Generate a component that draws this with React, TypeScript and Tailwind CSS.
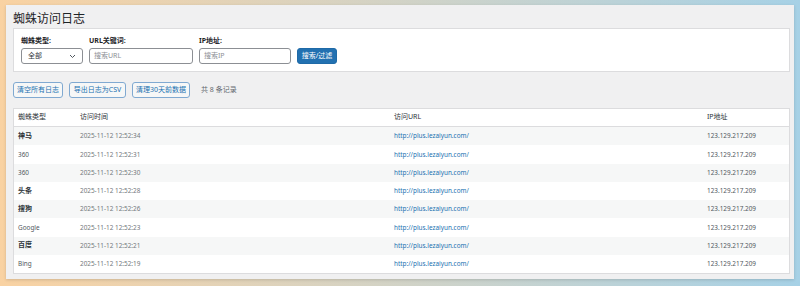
import React from "react";

const rows = [
  { type: "神马", bold: true, time: "2025-11-12 12:52:34" },
  { type: "360", bold: false, time: "2025-11-12 12:52:31" },
  { type: "360", bold: false, time: "2025-11-12 12:52:30" },
  { type: "头条", bold: true, time: "2025-11-12 12:52:28" },
  { type: "搜狗", bold: true, time: "2025-11-12 12:52:26" },
  { type: "Google", bold: false, time: "2025-11-12 12:52:23" },
  { type: "百度", bold: true, time: "2025-11-12 12:52:21" },
  { type: "Bing", bold: false, time: "2025-11-12 12:52:19" },
];

export default function App() {
  return (
    <div
      className="w-[800px] h-[286px] overflow-hidden bg-gradient-to-r from-[#f9d2a2] to-[#a6d1e6] pt-[5px] pl-[6px]"
      style={{ fontFamily: '"Noto Sans", "Noto Sans CJK SC", sans-serif' }}
    >
      <div className="w-[788px] h-[274px] bg-[#f0f0f1] pl-[7px] pr-[4px] shadow-[0_1px_3px_rgba(0,0,0,0.15)]">
        <h1 className="pt-[6px] text-[12px] leading-[16px] text-[#1d2327] h-[23px]">蜘蛛访问日志</h1>
        <div className="bg-white border border-[#dcdcde] h-[44px] pl-[7px] pt-[7px] flex gap-[6px] items-start">
          <div className="flex flex-col">
            <label className="text-[7px] leading-[10px] font-bold text-[#1d2327] mb-[2px]">蜘蛛类型:</label>
            <div className="w-[62px] h-[16px] border border-[#8c8f94] rounded-[3px] flex items-center justify-between px-[6px] text-[7px] text-[#2c3338]">
              <span>全部</span>
              <svg width="7" height="5" viewBox="0 0 7 5" fill="none">
                <path d="M1 1l2.5 2.5L6 1" stroke="#50575e" strokeWidth="1" />
              </svg>
            </div>
          </div>
          <div className="flex flex-col">
            <label className="text-[7px] leading-[10px] font-bold text-[#1d2327] mb-[2px]">URL关键词:</label>
            <div className="w-[104px] h-[16px] border border-[#8c8f94] rounded-[3px] flex items-center px-[4px] text-[7px] text-[#8c8f94]">
              搜索URL
            </div>
          </div>
          <div className="flex flex-col">
            <label className="text-[7px] leading-[10px] font-bold text-[#1d2327] mb-[2px]">IP地址:</label>
            <div className="w-[92px] h-[16px] border border-[#8c8f94] rounded-[3px] flex items-center px-[4px] text-[7px] text-[#8c8f94]">
              搜索IP
            </div>
          </div>
          <div className="mt-[12px] w-[40px] h-[16px] bg-[#2271b1] border border-[#1f6aa7] rounded-[3px] text-white text-[7px] flex items-center justify-center">
            搜索/过滤
          </div>
        </div>
        <div className="flex items-center gap-[6px] mt-[10px] h-[16px]">
          <div className="h-[16px] w-[50px] flex items-center justify-center border border-[#80a9d1] bg-[#f6f7f7] rounded-[3px] text-[7px] text-[#2271b1]">清空所有日志</div>
          <div className="h-[16px] w-[57px] flex items-center justify-center border border-[#80a9d1] bg-[#f6f7f7] rounded-[3px] text-[7px] text-[#2271b1]">导出日志为CSV</div>
          <div className="h-[16px] w-[58px] flex items-center justify-center border border-[#80a9d1] bg-[#f6f7f7] rounded-[3px] text-[7px] text-[#2271b1]">清理30天前数据</div>
          <span className="ml-[5px] text-[7px] text-[#646970]">共 8 条记录</span>
        </div>
        <div className="mt-[10px] bg-white border border-[#dcdcde]">
          <div className="flex h-[18px] items-center border-b border-[#dcdcde] text-[7px] text-[#2c3338]">
            <div className="w-[66px] pl-[4px]">蜘蛛类型</div>
            <div className="w-[314px]">访问时间</div>
            <div className="w-[313px]">访问URL</div>
            <div>IP地址</div>
          </div>
          {rows.map((r, i) => (
            <div
              key={i}
              className={`flex h-[18.25px] items-center text-[6.4px] text-[#50575e] ${i % 2 === 0 ? "bg-[#f6f7f7]" : "bg-white"}`}
            >
              <div className={`w-[66px] pl-[4px] ${r.bold ? "font-bold text-[7px] text-[#2c3338]" : ""}`}>{r.type}</div>
              <div className="w-[314px] text-[#72777c]">{r.time}</div>
              <div className="w-[313px] text-[#2271b1]">http://plus.lezaiyun.com/</div>
              <div>123.129.217.209</div>
            </div>
          ))}
        </div>
      </div>
    </div>
  );
}
